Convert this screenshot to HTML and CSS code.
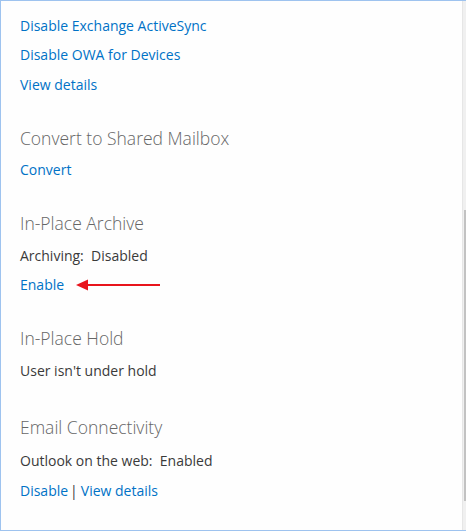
FILE: index.html
```html
<!DOCTYPE html>
<html>
<head>
<meta charset="utf-8">
<link rel="stylesheet" href="styles.css">
</head>
<body>
<div class="frame">
  <div class="viewport">
    <div class="content">
      <div class="row text cut">Mobile Devices</div>
      <div class="row"><a class="link">Disable Exchange ActiveSync</a></div>
      <div class="row"><a class="link">Disable OWA for Devices</a></div>
      <div class="row"><a class="link">View details</a></div>

      <section class="section">
        <h2 class="heading">Convert to Shared Mailbox</h2>
        <div class="row"><a class="link">Convert</a></div>
      </section>

      <section class="section">
        <h2 class="heading">In-Place Archive</h2>
        <div class="row text">Archiving:&nbsp; Disabled</div>
        <div class="row"><a class="link">Enable</a><svg class="arrow" width="86" height="12" viewBox="0 0 86 12"><path d="M10 6 H84" stroke="#e8141c" stroke-width="2"/><path d="M0 6 L12 0.5 L12 11.5 Z" fill="#e8141c"/></svg></div>
      </section>

      <section class="section">
        <h2 class="heading">In-Place Hold</h2>
        <div class="row text">User isn't under hold</div>
      </section>

      <section class="section last">
        <h2 class="heading">Email Connectivity</h2>
        <div class="row text">Outlook on the web:&nbsp; Enabled</div>
        <div class="row"><a class="link">Disable</a><span class="sep">|</span><a class="link">View details</a></div>
      </section>
    </div>
  </div>
  <div class="scrollbar">
    <div class="thumb" style="margin-top:209px;height:291px"></div>
  </div>
</div>
</body>
</html>
```
FILE: styles.css
```css
html, body {
  margin: 0;
  padding: 0;
  background: #ffffff;
}
body {
  font-family: "Open Sans", "Segoe UI", "Liberation Sans", sans-serif;
  font-size: 14px;
  color: #3a3a3a;
}
.frame {
  display: flex;
  width: 465px;
  height: 529px;
  border-top: 1px solid #9ec3ef;
  border-bottom: 1px solid #9ec3ef;
  border-left: 1px solid #9ec3ef;
  background: #fefefe;
}
.viewport {
  flex: 1;
  overflow: hidden;
}
.content {
  margin-top: -20px;
  padding-left: 19px;
  display: flex;
  flex-direction: column;
}
.row {
  height: 29.5px;
  line-height: 29.5px;
  white-space: nowrap;
  display: flex;
  align-items: center;
}
.text {
  color: #3a3a3a;
}
.link {
  color: #0072c6;
  cursor: pointer;
}
.sep {
  color: #3a3a3a;
  margin: 0 3px 0 2px;
}
.section {
  display: flex;
  flex-direction: column;
  margin-top: 22.5px;
}
.section.last {
  margin-top: 25.5px;
}
.heading {
  margin: 0;
  height: 33.5px;
  line-height: 33.5px;
  font-size: 17.5px;
  font-weight: 300;
  color: #666666;
  white-space: nowrap;
}
.section.last .heading {
  height: 35.5px;
  line-height: 33.5px;
}
.arrow {
  margin-left: 12px;
  display: block;
}
.scrollbar {
  width: 3px;
  border-left: 1px solid #e6e6e6;
  background: #f0f0f0;
  display: flex;
  flex-direction: column;
  align-items: flex-end;
}
.thumb {
  width: 2px;
  background: #c2c2c2;
}
```
